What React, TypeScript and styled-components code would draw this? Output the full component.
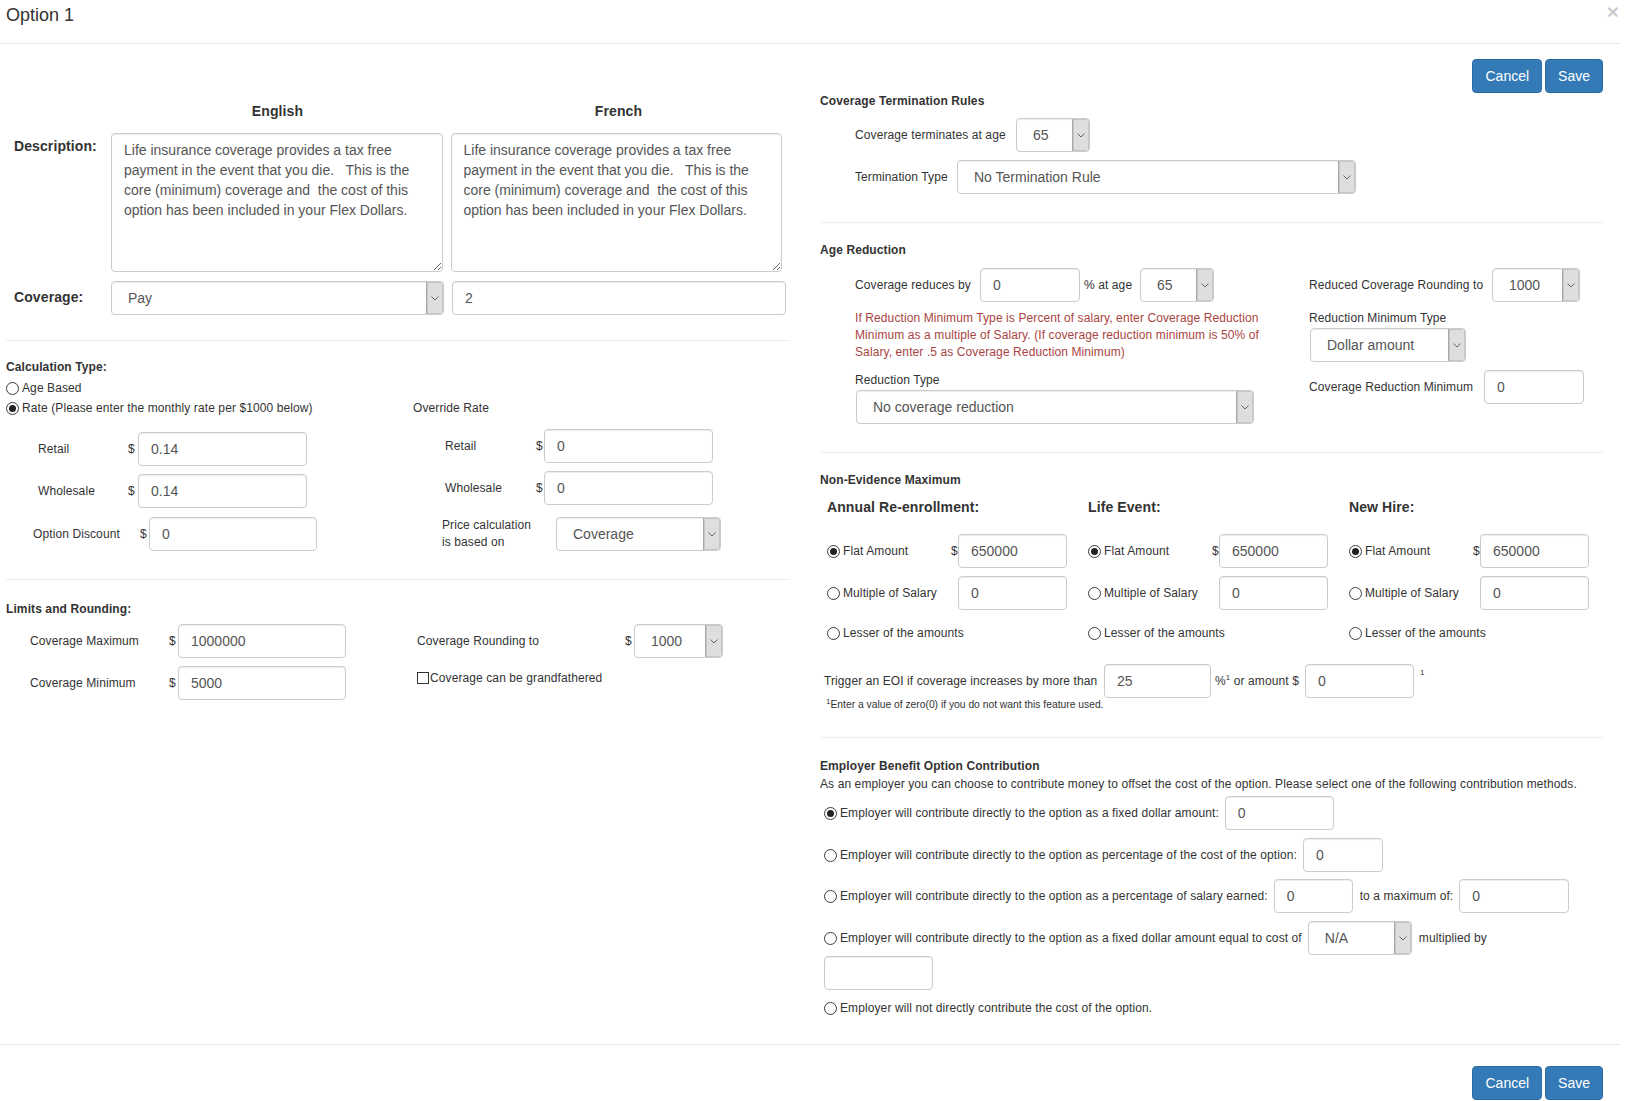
import React, { FC } from "react";
import styled, { createGlobalStyle } from "styled-components";

const GlobalStyle = createGlobalStyle`
  html, body {
    margin: 0;
    padding: 0;
    background: #fff;
  }
  body {
    font-family: "Liberation Sans", Arial, Helvetica, sans-serif;
    font-size: 12px;
    letter-spacing: 0.1px;
    color: #333;
  }
  * {
    box-sizing: border-box;
  }
`;

const DESCRIPTION =
  "Life insurance coverage provides a tax free payment in the event that you die.   This is the core (minimum) coverage and  the cost of this option has been included in your Flex Dollars.";

export default function App() {
  return (
    <>
      <GlobalStyle />
      <Modal>
        <Header>
          <Title>Option 1</Title>
          <Close>×</Close>
        </Header>

        <Body>
          <LeftCol>
            <LangRow>
              <LangCell>English</LangCell>
              <LangCell>French</LangCell>
            </LangRow>
            <DescRow $mt={12}>
              <BigLabel $pt={3}>Description:</BigLabel>
              <TextArea defaultValue={DESCRIPTION} />
              <TextArea defaultValue={DESCRIPTION} />
            </DescRow>
            <DescRow $mt={9}>
              <BigLabel $pt={6}>Coverage:</BigLabel>
              <Select w={333} value="Pay" />
              <TextInput $w={334} $ml={8} defaultValue="2" />
            </DescRow>

            <Divider $mt={25} />

            <SectionTitle $mt={17}>Calculation Type:</SectionTitle>
            <RadioLine $mt={2}>
              <RadioMark />
              Age Based
            </RadioLine>
            <SubGrid $left={407}>
              <SubCol>
                <RadioLine>
                  <RadioMark $on />
                  Rate (Please enter the monthly rate per $1000 below)
                </RadioLine>
                <Field $mt={14} $indent={32}>
                  <Label $w={90}>Retail</Label>
                  <Dollar $w={10}>$</Dollar>
                  <TextInput $w={169} defaultValue="0.14" />
                </Field>
                <Field $mt={8} $indent={32}>
                  <Label $w={90}>Wholesale</Label>
                  <Dollar $w={10}>$</Dollar>
                  <TextInput $w={169} defaultValue="0.14" />
                </Field>
                <Field $mt={9} $indent={27}>
                  <Label $w={107}>Option Discount</Label>
                  <Dollar $w={9}>$</Dollar>
                  <TextInput $w={168} defaultValue="0" />
                </Field>
              </SubCol>
              <SubCol>
                <PlainLine>Override Rate</PlainLine>
                <Field $mt={11} $indent={32}>
                  <Label $w={91}>Retail</Label>
                  <Dollar $w={8}>$</Dollar>
                  <TextInput $w={169} defaultValue="0" />
                </Field>
                <Field $mt={8} $indent={32}>
                  <Label $w={91}>Wholesale</Label>
                  <Dollar $w={8}>$</Dollar>
                  <TextInput $w={169} defaultValue="0" />
                </Field>
                <Field $mt={12} $indent={29}>
                  <Label $w={114} $lh={17}>
                    Price calculation
                    <br />
                    is based on
                  </Label>
                  <Select w={165} value="Coverage" />
                </Field>
              </SubCol>
            </SubGrid>

            <Divider $mt={28} />

            <SectionTitle $mt={20}>Limits and Rounding:</SectionTitle>
            <SubGrid $left={411} $mt={6}>
              <SubCol>
                <Field $indent={24}>
                  <Label $w={139}>Coverage Maximum</Label>
                  <Dollar $w={9}>$</Dollar>
                  <TextInput $w={168} defaultValue="1000000" />
                </Field>
                <Field $mt={8} $indent={24}>
                  <Label $w={139}>Coverage Minimum</Label>
                  <Dollar $w={9}>$</Dollar>
                  <TextInput $w={168} defaultValue="5000" />
                </Field>
              </SubCol>
              <SubCol>
                <Field>
                  <Label $w={208}>Coverage Rounding to</Label>
                  <Dollar $w={9}>$</Dollar>
                  <Select w={89} value="1000" />
                </Field>
                <RadioLine $mt={10}>
                  <CheckMark />
                  Coverage can be grandfathered
                </RadioLine>
              </SubCol>
            </SubGrid>
          </LeftCol>

          <RightCol>
            <ButtonRow $mt={15}>
              <Button>Cancel</Button>
              <Button>Save</Button>
            </ButtonRow>

            <SectionTitle $mt={0} $lh={16}>
              Coverage Termination Rules
            </SectionTitle>
            <Field $mt={9} $indent={35}>
              <Label $w={161}>Coverage terminates at age</Label>
              <Select w={74} value="65" />
            </Field>
            <Field $mt={8} $indent={35}>
              <Label $w={102}>Termination Type</Label>
              <Select w={399} value="No Termination Rule" />
            </Field>

            <Divider $mt={28} />

            <SectionTitle $mt={18}>Age Reduction</SectionTitle>
            <SubGrid $left={489} $mt={9}>
              <SubCol>
                <Field $indent={35}>
                  <Label $w={125}>Coverage reduces by</Label>
                  <TextInput $w={100} defaultValue="0" />
                  <Label $w={56} $ml={4}>
                    % at age
                  </Label>
                  <Select w={74} value="65" />
                </Field>
                <Warning $mt={8}>
                  If Reduction Minimum Type is Percent of salary, enter Coverage
                  Reduction Minimum as a multiple of Salary. (If coverage
                  reduction minimum is 50% of Salary, enter .5 as Coverage
                  Reduction Minimum)
                </Warning>
                <PlainLine $mt={11} $lh={16} $indent={35}>
                  Reduction Type
                </PlainLine>
                <Field $mt={2} $indent={36}>
                  <Select w={398} value="No coverage reduction" />
                </Field>
              </SubCol>
              <SubCol>
                <Field>
                  <Label $w={183}>Reduced Coverage Rounding to</Label>
                  <Select w={88} value="1000" />
                </Field>
                <PlainLine $mt={8} $lh={16}>
                  Reduction Minimum Type
                </PlainLine>
                <Field $mt={2} $indent={1}>
                  <Select w={156} value="Dollar amount" />
                </Field>
                <Field $mt={8}>
                  <Label $w={175}>Coverage Reduction Minimum</Label>
                  <TextInput $w={100} defaultValue="0" />
                </Field>
              </SubCol>
            </SubGrid>

            <Divider $mt={28} />

            <SectionTitle $mt={18}>Non-Evidence Maximum</SectionTitle>
            <NemGrid>
              {["Annual Re-enrollment:", "Life Event:", "New Hire:"].map(
                (head) => (
                  <SubCol key={head}>
                    <NemHead>{head}</NemHead>
                    <Field $mt={17}>
                      <RadioLabel $w={124}>
                        <RadioMark $on />
                        Flat Amount
                      </RadioLabel>
                      <Dollar $w={7}>$</Dollar>
                      <TextInput $w={109} defaultValue="650000" />
                    </Field>
                    <Field $mt={8}>
                      <RadioLabel $w={131}>
                        <RadioMark />
                        Multiple of Salary
                      </RadioLabel>
                      <TextInput $w={109} defaultValue="0" />
                    </Field>
                    <RadioLine $mt={13}>
                      <RadioMark />
                      Lesser of the amounts
                    </RadioLine>
                  </SubCol>
                )
              )}
            </NemGrid>
            <Field $mt={21} $indent={4}>
              <Label $w={280}>
                Trigger an EOI if coverage increases by more than
              </Label>
              <TextInput $w={107} defaultValue="25" />
              <Label $ml={4} $mr={6}>
                %<Sup>1</Sup> or amount $
              </Label>
              <TextInput $w={109} defaultValue="0" />
              <Sup $raise={8} $ml={6}>
                1
              </Sup>
            </Field>
            <Footnote>
              <Sup>1</Sup>Enter a value of zero(0) if you do not want this
              feature used.
            </Footnote>

            <Divider $mt={26} />

            <SectionTitle $mt={19}>
              Employer Benefit Option Contribution
            </SectionTitle>
            <PlainLine $lh={18}>
              As an employer you can choose to contribute money to offset the
              cost of the option. Please select one of the following
              contribution methods.
            </PlainLine>
            <Field $mt={3} $indent={4}>
              <RadioMark $on />
              Employer will contribute directly to the option as a fixed dollar
              amount:
              <TextInput $w={109} $ml={6} defaultValue="0" />
            </Field>
            <Field $mt={8} $indent={4}>
              <RadioMark />
              Employer will contribute directly to the option as percentage of
              the cost of the option:
              <TextInput $w={80} $ml={6} defaultValue="0" />
            </Field>
            <Field $mt={7} $indent={4}>
              <RadioMark />
              Employer will contribute directly to the option as a percentage of
              salary earned:
              <TextInput $w={79} $ml={6} defaultValue="0" />
              <Label $ml={7}>to a maximum of:</Label>
              <TextInput $w={110} $ml={6} defaultValue="0" />
            </Field>
            <Field $mt={8} $indent={4}>
              <RadioMark />
              Employer will contribute directly to the option as a fixed dollar
              amount equal to cost of
              <Select w={104} value="N/A" ml={6} />
              <Label $ml={7}>multiplied by</Label>
            </Field>
            <Field $mt={1} $indent={4}>
              <TextInput $w={109} defaultValue="" />
            </Field>
            <RadioLine $mt={8} $indent={4}>
              <RadioMark />
              Employer will not directly contribute the cost of the option.
            </RadioLine>
          </RightCol>
        </Body>

        <Footer>
          <Button>Cancel</Button>
          <Button>Save</Button>
        </Footer>
      </Modal>
    </>
  );
}

const Select: FC<{ w: number; value: string; ml?: number }> = ({
  w,
  value,
  ml,
}) => (
  <SelectBox $w={w} $ml={ml}>
    <SelectValue>{value}</SelectValue>
    <SelectArrow>
      <svg width="8" height="5" viewBox="0 0 8 5">
        <polyline
          points="0.5,0.5 4,4 7.5,0.5"
          fill="none"
          stroke="#666"
          strokeWidth="1"
        />
      </svg>
    </SelectArrow>
  </SelectBox>
);

const Modal = styled.div`
  width: 1620px;
  background: #fff;
`;

const Header = styled.div`
  height: 44px;
  padding: 5px 1px 0 6px;
  border-bottom: 1px solid #e5e5e5;
  display: flex;
  justify-content: space-between;
  align-items: flex-start;
`;

const Title = styled.h4`
  margin: 0;
  font-size: 18px;
  line-height: 20px;
  font-weight: normal;
  letter-spacing: 0;
  color: #333;
`;

const Close = styled.span`
  font-size: 21px;
  line-height: 14px;
  font-weight: bold;
  color: #000;
  opacity: 0.2;
`;

const Body = styled.div`
  display: flex;
  align-items: flex-start;
  padding: 0 0 26px 6px;
`;

const LeftCol = styled.div`
  width: 784px;
  flex: none;
`;

const RightCol = styled.div`
  width: 783px;
  flex: none;
  margin-left: 30px;
`;

const LangRow = styled.div`
  display: flex;
  gap: 8px;
  margin-top: 57px;
  padding-left: 105px;
`;

const LangCell = styled.div`
  width: 333px;
  text-align: center;
  font-weight: bold;
  font-size: 14px;
  line-height: 20px;
`;

const DescRow = styled.div<{ $mt: number }>`
  display: flex;
  align-items: flex-start;
  margin-top: ${(p) => p.$mt}px;
`;

const BigLabel = styled.div<{ $pt: number }>`
  width: 105px;
  flex: none;
  padding: ${(p) => p.$pt}px 0 0 8px;
  font-weight: bold;
  font-size: 14px;
  line-height: 20px;
`;

const TextArea = styled.textarea`
  width: 333px;
  height: 139px;
  margin: 0 8px 0 0;
  padding: 6px 12px;
  border: 1px solid #ccc;
  border-radius: 4px;
  box-shadow: inset 0 1px 1px rgba(0, 0, 0, 0.075);
  font-family: "Liberation Sans", Arial, Helvetica, sans-serif;
  font-size: 14px;
  line-height: 20px;
  color: #555;
  resize: vertical;
  outline: none;
`;

const TextInput = styled.input<{ $w: number; $ml?: number }>`
  width: ${(p) => p.$w}px;
  height: 34px;
  flex: none;
  margin: 0 0 0 ${(p) => p.$ml ?? 0}px;
  padding: 6px 12px;
  border: 1px solid #ccc;
  border-radius: 4px;
  box-shadow: inset 0 1px 1px rgba(0, 0, 0, 0.075);
  background: #fff;
  font-family: "Liberation Sans", Arial, Helvetica, sans-serif;
  font-size: 14px;
  color: #555;
  outline: none;
`;

const SelectBox = styled.div<{ $w: number; $ml?: number }>`
  width: ${(p) => p.$w}px;
  height: 34px;
  flex: none;
  display: flex;
  margin-left: ${(p) => p.$ml ?? 0}px;
  border: 1px solid #ccc;
  border-radius: 4px;
  background: #fff;
  box-shadow: inset 0 1px 1px rgba(0, 0, 0, 0.075);
  overflow: hidden;
`;

const SelectValue = styled.span`
  flex: 1;
  display: flex;
  align-items: center;
  padding-left: 16px;
  font-size: 14px;
  letter-spacing: 0;
  color: #555;
  white-space: nowrap;
`;

const SelectArrow = styled.span`
  width: 17px;
  flex: none;
  display: flex;
  align-items: center;
  justify-content: center;
  background: #dedede;
  border-left: 1px solid #a8a8a8;
  box-shadow: inset 0 0 0 1px #c6c6c6;
`;

const Divider = styled.div<{ $mt: number }>`
  height: 1px;
  background: #eee;
  margin-top: ${(p) => p.$mt}px;
`;

const SectionTitle = styled.div<{ $mt: number; $lh?: number }>`
  margin-top: ${(p) => p.$mt}px;
  font-weight: bold;
  font-size: 12px;
  line-height: ${(p) => p.$lh ?? 18}px;
  white-space: nowrap;
`;

const PlainLine = styled.div<{ $mt?: number; $lh?: number; $indent?: number }>`
  margin-top: ${(p) => p.$mt ?? 0}px;
  padding-left: ${(p) => p.$indent ?? 0}px;
  line-height: ${(p) => p.$lh ?? 20}px;
  white-space: nowrap;
`;

const RadioLine = styled.div<{ $mt?: number; $indent?: number }>`
  display: flex;
  align-items: center;
  margin-top: ${(p) => p.$mt ?? 0}px;
  padding-left: ${(p) => p.$indent ?? 0}px;
  line-height: 20px;
  white-space: nowrap;
`;

const RadioMark = styled.span<{ $on?: boolean }>`
  position: relative;
  flex: none;
  width: 13px;
  height: 13px;
  margin-right: 3px;
  border: 1px solid #3c3c3c;
  border-radius: 50%;
  background: #fff;

  &::after {
    content: "";
    display: ${(p) => (p.$on ? "block" : "none")};
    position: absolute;
    left: 2px;
    top: 2px;
    width: 7px;
    height: 7px;
    border-radius: 50%;
    background: #222;
  }
`;

const CheckMark = styled.span`
  flex: none;
  width: 12px;
  height: 12px;
  margin-right: 1px;
  border: 1px solid #333;
  background: #fff;
`;

const SubGrid = styled.div<{ $left: number; $mt?: number }>`
  display: grid;
  grid-template-columns: ${(p) => p.$left}px 1fr;
  align-items: start;
  margin-top: ${(p) => p.$mt ?? 0}px;
`;

const SubCol = styled.div`
  display: flex;
  flex-direction: column;
`;

const Field = styled.div<{ $mt?: number; $indent?: number }>`
  display: flex;
  align-items: center;
  margin-top: ${(p) => p.$mt ?? 0}px;
  padding-left: ${(p) => p.$indent ?? 0}px;
  white-space: nowrap;
`;

const Label = styled.span<{
  $w?: number;
  $ml?: number;
  $mr?: number;
  $lh?: number;
}>`
  flex: none;
  width: ${(p) => (p.$w ? `${p.$w}px` : "auto")};
  margin-left: ${(p) => p.$ml ?? 0}px;
  margin-right: ${(p) => p.$mr ?? 0}px;
  line-height: ${(p) => p.$lh ?? 16}px;
  white-space: nowrap;
`;

const RadioLabel = styled.span<{ $w: number }>`
  flex: none;
  display: flex;
  align-items: center;
  width: ${(p) => p.$w}px;
  white-space: nowrap;
`;

const Dollar = styled.span<{ $w: number }>`
  flex: none;
  width: ${(p) => p.$w}px;
`;

const Warning = styled.div<{ $mt: number }>`
  width: 455px;
  margin-top: ${(p) => p.$mt}px;
  padding-left: 35px;
  color: #a94442;
  line-height: 17px;
`;

const NemGrid = styled.div`
  display: grid;
  grid-template-columns: repeat(3, 261px);
  margin-top: 8px;
  padding-left: 7px;
`;

const NemHead = styled.div`
  font-weight: bold;
  font-size: 14px;
  line-height: 20px;
`;

const Sup = styled.sup<{ $raise?: number; $ml?: number }>`
  font-size: 8px;
  line-height: 0;
  margin-left: ${(p) => p.$ml ?? 0}px;
  position: relative;
  top: ${(p) => -(p.$raise ?? 0)}px;
`;

const Footnote = styled.div`
  margin-top: 1px;
  padding-left: 6px;
  font-size: 10.3px;
  letter-spacing: 0;
  line-height: 12px;
`;

const ButtonRow = styled.div<{ $mt: number }>`
  display: flex;
  justify-content: flex-end;
  gap: 3px;
  margin-top: ${(p) => p.$mt}px;
`;

const Button = styled.button`
  height: 34px;
  padding: 6px 12px;
  border: 1px solid #2e6da4;
  border-radius: 4px;
  background: #337ab7;
  color: #fff;
  font-family: "Liberation Sans", Arial, Helvetica, sans-serif;
  font-size: 14px;
  line-height: 20px;
  cursor: pointer;
`;

const Footer = styled.div`
  display: flex;
  justify-content: flex-end;
  gap: 3px;
  padding: 21px 17px 0 0;
  border-top: 1px solid #e5e5e5;
`;
